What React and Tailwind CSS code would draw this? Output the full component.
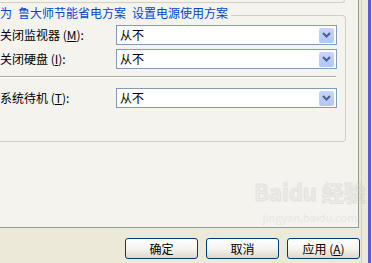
import React from 'react';

const font = { fontFamily: '"Noto Sans CJK SC", "Liberation Sans", sans-serif' };

function Combo() {
  return (
    <div className="w-[221px] h-[20px] bg-white border border-[#7f9db9] flex items-center justify-between">
      <span className="pl-[3px] text-[12px] leading-none text-black">从不</span>
      <div className="w-[15px] h-[15px] mr-[2px] rounded-[2px] bg-gradient-to-b from-[#c6d6fc] to-[#b0c6f7] flex items-center justify-center">
        <svg width="9" height="6" viewBox="0 0 9 6">
          <path d="M1 1 L4.5 4.5 L8 1" fill="none" stroke="#4d6185" strokeWidth="2" />
        </svg>
      </div>
    </div>
  );
}

function Row({ label, hotkey }) {
  return (
    <div className="flex items-center">
      <div className="w-[116px] text-[12px] leading-none text-black whitespace-nowrap">
        {label} (<u>{hotkey}</u>):
      </div>
      <Combo />
    </div>
  );
}

function XpButton({ children }) {
  return (
    <button className="w-[73px] h-[21px] rounded-[3px] border border-[#003c74] bg-gradient-to-b from-white via-[#f5f4ef] to-[#dcd8cc] text-[12px] leading-none text-black">
      {children}
    </button>
  );
}

export default function App() {
  return (
    <div className="w-[372px] h-[263px] bg-[#ece9d8] flex overflow-hidden relative" style={font}>
      <div className="w-[360px] flex flex-col">
        {/* 选项卡页 */}
        <div className="w-[359px] h-[228px] bg-[#f4f3ee] border-r border-b border-[#919b9c]">
          {/* 上一个分组框的底边 */}
          <div className="w-[345px] h-[3px] border-r border-b border-[#d0d0bf] rounded-br-[3px]" />

          {/* 电源使用方案 */}
          <div className="relative mt-[12px] w-[346px] h-[127px] border-t border-r border-b border-[#d0d0bf] rounded-r-[4px]">
            <div className="absolute -top-[9px] left-0 pr-[3px] bg-[#f4f3ee] text-[12px] leading-none text-[#0046d5] whitespace-nowrap flex">
              <span>为</span>
              <span className="w-[6px]" />
              <span>鲁大师节能省电方案</span>
              <span className="w-[6px]" />
              <span>设置电源使用方案</span>
            </div>
            <div className="pt-[9px] flex flex-col gap-[4px]">
              <Row label="关闭监视器" hotkey="M" />
              <Row label="关闭硬盘" hotkey="I" />
            </div>
            <div className="mt-[7px] w-[336px] border-t border-[#aca899] border-b border-b-white" />
            <div className="mt-[10px]">
              <Row label="系统待机" hotkey="T" />
            </div>
          </div>
        </div>

        {/* 按钮 */}
        <div className="pt-[10px] flex justify-end gap-[8px]">
          <XpButton>确定</XpButton>
          <XpButton>取消</XpButton>
          <XpButton>
            应用 (<u>A</u>)
          </XpButton>
        </div>
      </div>

      {/* 右侧窗口边缘 */}
      <div className="flex-1 flex">
        <div className="w-[1px] bg-[#ece9d8]" />
        <div className="w-[1px] bg-[#d6d2c2]" />
        <div className="w-[6px] bg-[#ece9d8]" />
        <div className="w-[3px] bg-[#5858d0]" />
        <div className="flex-1 bg-[#f4f4f4]" />
      </div>

      {/* 水印 */}
      <div className="absolute left-[254px] top-[180px] flex flex-col items-center pointer-events-none opacity-30">
        <div className="text-[22px] font-bold leading-none text-[#d9d9d9]" style={{ WebkitTextStroke: '1px #bdbdbd' }}>
          Baidu 经验
        </div>
        <div className="mt-[10px] text-[11px] leading-none text-[#c8c8c8]">jingyan.baidu.com</div>
      </div>
    </div>
  );
}
